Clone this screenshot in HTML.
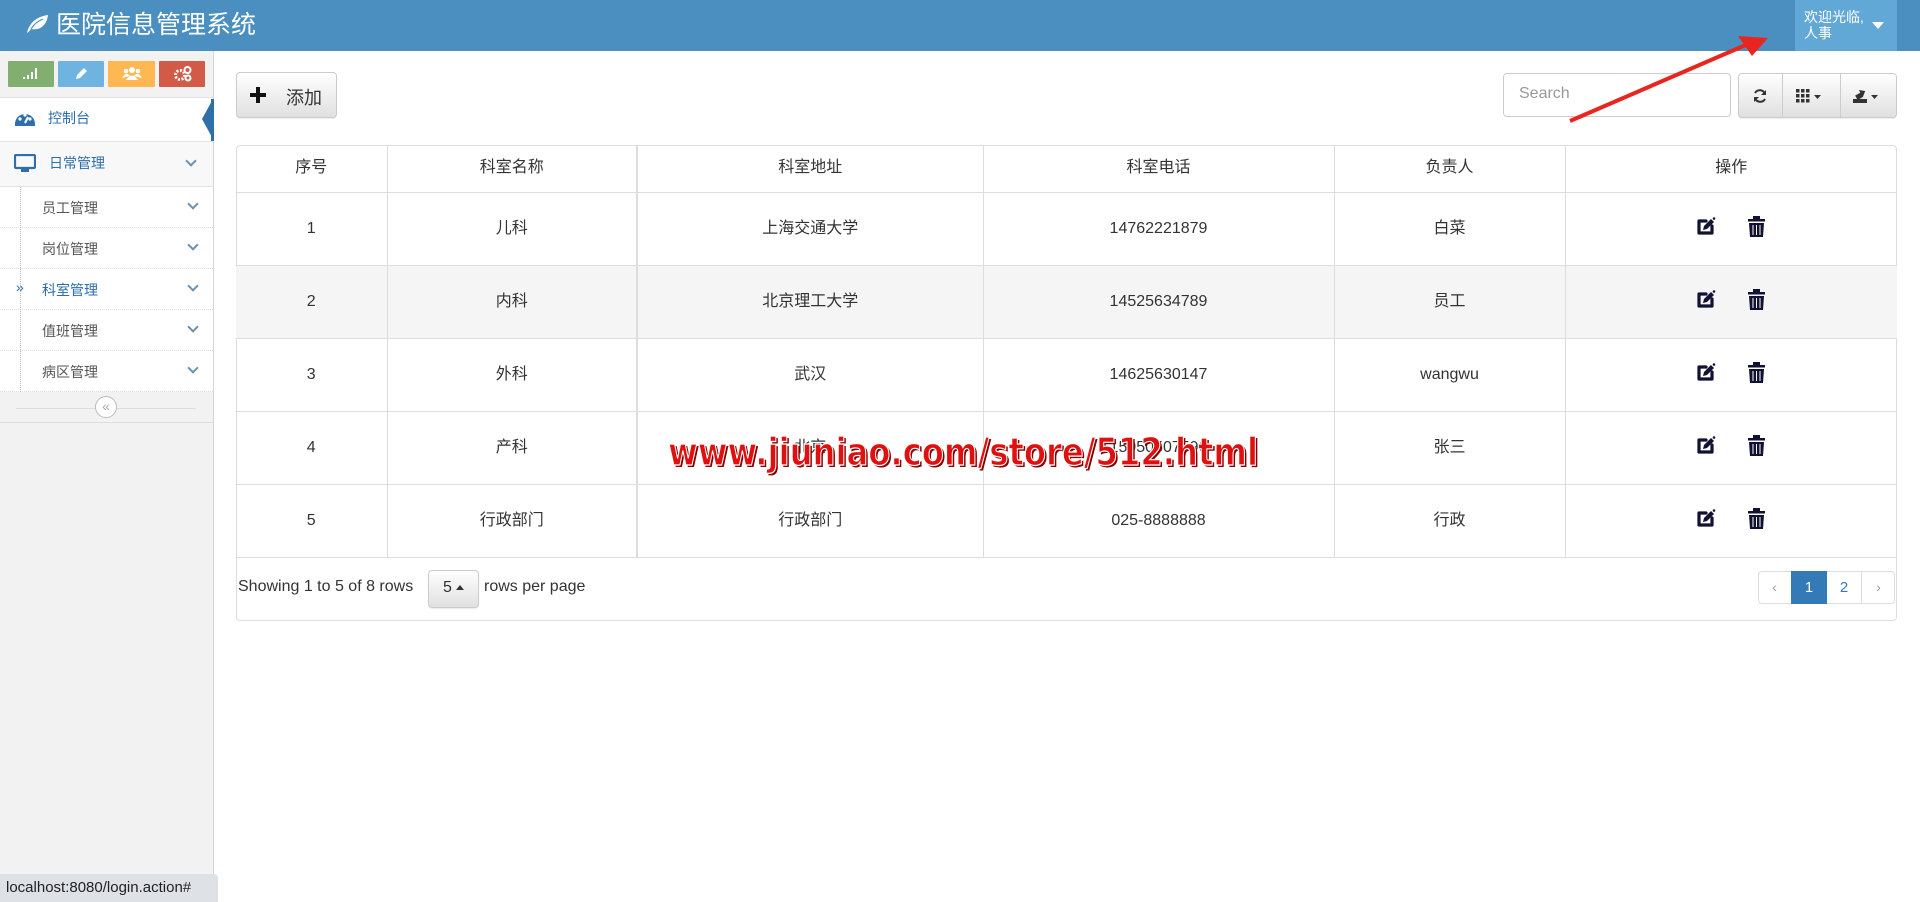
<!DOCTYPE html>
<html><head><meta charset="utf-8">
<style>
*{box-sizing:border-box;margin:0;padding:0}
body{width:1920px;height:902px;overflow:hidden;background:#fff;font-family:"Liberation Sans","Noto Sans CJK SC",sans-serif;color:#333;position:relative}
.abs{position:absolute}
.hdr{left:0;top:0;width:1920px;height:51px;background:#4a8fc0}
.title{left:56px;top:9px;color:#fff;font-size:25px;line-height:32px}
.welcome{left:1795px;top:0;width:102px;height:51px;background:#62a8d6;color:#fff;font-size:14px;line-height:16px;padding:9px 0 0 9px}
.side{left:0;top:51px;width:214px;height:851px;background:#f2f2f2;border-right:1px solid #d5d5d5}
.sb{top:61px;height:26px;border-radius:1px}
.row{left:0;width:213px;border-bottom:1px solid #e3e3e3;font-size:14px}
.sub{left:0;width:213px;height:41px;border-bottom:1px dotted #ddd;background:#fff;font-size:14px;color:#555}
.sub span{position:absolute;left:42px;top:11px}
.chev{position:absolute;right:16px;width:8px;height:8px;border-right:2px solid #6b90b0;border-bottom:2px solid #6b90b0;transform:rotate(45deg)}
.btn{border:1px solid #ccc;border-radius:4px;background:linear-gradient(#fff,#e0e0e0);box-shadow:0 1px 1px rgba(0,0,0,.08)}
table{border-collapse:collapse;position:absolute;left:236px;top:145px;width:1661px;font-size:16px}
td,th{border-right:1px solid #ddd;border-bottom:1px solid #ddd;text-align:center;font-weight:normal;line-height:20px;vertical-align:middle;padding:0}
th{height:47px}
td{height:73px}
tr td:last-child,tr th:last-child{border-right:none}
</style></head><body>
<div class="abs hdr"></div>
<svg class="abs" style="left:25px;top:14px" width="24" height="20" viewBox="0 0 24 20"><path d="M2 19 C4 10 10 3 23 1 C22 10 16 17 6 15 C5 16 4 18 2 19Z" fill="#fff"/><path d="M6 15 C9 10 13 7 18 5" fill="none" stroke="#4a8fc0" stroke-width="1.2"/></svg>
<div class="abs title">医院信息管理系统</div>
<div class="abs welcome">欢迎光临,<br>人事</div>
<div class="abs" style="left:1872px;top:22px;border:6px solid transparent;border-top:7px solid #fff;border-bottom:0;width:0"></div>

<div class="abs side"></div>
<div class="abs sb" style="left:8px;width:46px;background:#82af6f"></div>
<div class="abs sb" style="left:58px;width:46px;background:#6fb3e0"></div>
<div class="abs sb" style="left:108px;width:47px;background:#ffb752"></div>
<div class="abs sb" style="left:159px;width:46px;background:#d15b47"></div>
<svg class="abs" style="left:22px;top:66px" width="16" height="14"><rect x="1" y="11" width="2" height="2" fill="#fff"/><rect x="5" y="9" width="2" height="4" fill="#fff"/><rect x="9" y="6" width="2" height="7" fill="#fff"/><rect x="13" y="2" width="2" height="11" fill="#fff"/></svg>
<svg class="abs" style="left:73px;top:66px" width="16" height="16"><path d="M3 13 L4 9 L11 2 L14 5 L7 12Z" fill="#fff"/></svg>
<svg class="abs" style="left:122px;top:65px" width="20" height="17"><circle cx="10" cy="5" r="3" fill="#fff"/><circle cx="4" cy="6" r="2.3" fill="#fff"/><circle cx="16" cy="6" r="2.3" fill="#fff"/><path d="M4 15 Q10 6 16 15Z M0 13 Q4 6 8 11Z M12 11 Q16 6 20 13Z" fill="#fff"/></svg>
<svg class="abs" style="left:173px;top:65px" width="20" height="17"><circle cx="7" cy="10" r="4.5" fill="none" stroke="#fff" stroke-width="3" stroke-dasharray="2 1.5"/><circle cx="14.5" cy="5" r="3" fill="none" stroke="#fff" stroke-width="2"/><circle cx="15" cy="13" r="2.5" fill="none" stroke="#fff" stroke-width="2"/></svg>

<div class="abs row" style="top:97px;height:45px;background:#fff;border-top:1px solid #e3e3e3"></div>
<svg class="abs" style="left:14px;top:109px" width="22" height="18"><path d="M1 15 A10 10 0 0 1 21 15 L21 17 L1 17Z" fill="#2f6fa8"/><circle cx="6" cy="10" r="1.6" fill="#fff"/><circle cx="11" cy="6" r="1.6" fill="#fff"/><circle cx="16" cy="10" r="1.6" fill="#fff"/><path d="M11 14 L14 8" stroke="#fff" stroke-width="2"/></svg>
<div class="abs" style="left:48px;top:108px;font-size:14px;color:#2b6ea8">控制台</div>
<div class="abs" style="left:202px;top:99px;width:0;height:0;border-top:20px solid transparent;border-bottom:20px solid transparent;border-right:11px solid #2f6fa8"></div>
<div class="abs" style="left:211px;top:99px;width:3px;height:42px;background:#2f6fa8"></div>

<div class="abs row" style="top:142px;height:45px;background:#f8f8f8"></div>
<svg class="abs" style="left:14px;top:154px" width="22" height="20"><rect x="1" y="1" width="20" height="13" rx="1" fill="none" stroke="#2f6fa8" stroke-width="2.2"/><rect x="7" y="15" width="8" height="3" fill="#2f6fa8"/></svg>
<div class="abs" style="left:49px;top:153px;font-size:14px;color:#2b6ea8">日常管理</div>
<div class="chev" style="position:absolute;left:187px;top:157px"></div>

<div class="abs sub" style="top:187px"><span>员工管理</span><div class="chev" style="top:13px"></div></div>
<div class="abs sub" style="top:228px"><span>岗位管理</span><div class="chev" style="top:13px"></div></div>
<div class="abs sub" style="top:269px"><span style="color:#2b6ea8">科室管理</span><div class="chev" style="top:13px"></div><div style="position:absolute;left:16px;top:10px;color:#2b6ea8;font-size:14px">»</div></div>
<div class="abs sub" style="top:310px"><span>值班管理</span><div class="chev" style="top:13px"></div></div>
<div class="abs sub" style="top:351px"><span>病区管理</span><div class="chev" style="top:13px"></div></div>
<div class="abs" style="left:20px;top:187px;height:205px;border-left:1px dotted #bbb"></div>
<div class="abs" style="left:0;top:392px;width:213px;height:31px;background:#f2f2f2;border-bottom:1px solid #ddd"></div>
<div class="abs" style="left:16px;top:408px;width:180px;border-top:1px solid #ddd"></div>
<div class="abs" style="left:95px;top:396px;width:22px;height:22px;border-radius:50%;border:1px solid #bbb;background:#fff;color:#aaa;font-size:14px;line-height:19px;text-align:center">«</div>

<div class="abs btn" style="left:236px;top:72px;width:101px;height:46px"></div>
<svg class="abs" style="left:250px;top:87px" width="16" height="16"><path d="M6 0h4v6h6v4h-6v6h-4v-6h-6v-4h6z" fill="#111"/></svg>
<div class="abs" style="left:286px;top:84px;font-size:18px;color:#333">添加</div>

<div class="abs" style="left:1503px;top:73px;width:228px;height:44px;border:1px solid #ccc;border-radius:4px;font-size:16px;color:#999;padding:11px 0 0 15px">Search</div>
<div class="abs btn" style="left:1738px;top:73px;width:159px;height:45px"></div>
<div class="abs" style="left:1782px;top:74px;height:43px;border-left:1px solid #ccc"></div>
<div class="abs" style="left:1840px;top:74px;height:43px;border-left:1px solid #ccc"></div>
<svg class="abs" style="left:1752px;top:88px" width="16" height="16"><path d="M13 6 A5.5 5.5 0 0 0 3 5" fill="none" stroke="#333" stroke-width="2"/><path d="M3 10 A5.5 5.5 0 0 0 13 11" fill="none" stroke="#333" stroke-width="2"/><path d="M14 2v5h-5z M2 14v-5h5z" fill="#333"/></svg>
<svg class="abs" style="left:1796px;top:89px" width="30" height="14"><g fill="#333"><rect x="0" y="0" width="3.5" height="3.5"/><rect x="5" y="0" width="3.5" height="3.5"/><rect x="10" y="0" width="3.5" height="3.5"/><rect x="0" y="5" width="3.5" height="3.5"/><rect x="5" y="5" width="3.5" height="3.5"/><rect x="10" y="5" width="3.5" height="3.5"/><rect x="0" y="10" width="3.5" height="3.5"/><rect x="5" y="10" width="3.5" height="3.5"/><rect x="10" y="10" width="3.5" height="3.5"/><path d="M18 6h7l-3.5 4z"/></g></svg>
<svg class="abs" style="left:1853px;top:86px" width="32" height="18"><g fill="#333"><rect x="0" y="13" width="14" height="4"/><path d="M2 12 L2 7 L8 7 L8 4 L13 8 L8 12 Z" transform="rotate(-30 7 8)"/><path d="M18 9h7l-3.5 4z"/></g></svg>

<div class="abs" style="left:236px;top:145px;width:1661px;height:476px;border:1px solid #ddd;border-radius:4px"></div>
<table>
<tr><th style="width:151px">序号</th><th style="width:250px;border-right:2px solid #ddd">科室名称</th><th style="width:346px">科室地址</th><th style="width:351px">科室电话</th><th style="width:231px">负责人</th><th>操作</th></tr>
<tr><td>1</td><td style="border-right:2px solid #ddd">儿科</td><td>上海交通大学</td><td>14762221879</td><td>白菜</td><td></td></tr>
<tr style="background:#f5f5f5"><td>2</td><td style="border-right:2px solid #ddd">内科</td><td>北京理工大学</td><td>14525634789</td><td>员工</td><td></td></tr>
<tr><td>3</td><td style="border-right:2px solid #ddd">外科</td><td>武汉</td><td>14625630147</td><td>wangwu</td><td></td></tr>
<tr><td>4</td><td style="border-right:2px solid #ddd">产科</td><td>北京</td><td>15950507596</td><td>张三</td><td></td></tr>
<tr><td>5</td><td style="border-right:2px solid #ddd">行政部门</td><td>行政部门</td><td>025-8888888</td><td>行政</td><td></td></tr>
</table>
<svg class="abs" style="left:1696px;top:212px" width="80" height="320">
<defs><g id="ic"><path d="M3 5 h7 M3 5 v12 h13 v-7" fill="none" stroke="#111133" stroke-width="3.2" stroke-linejoin="round" stroke-linecap="round"/><path d="M7 14 L8 10 L15 3 L18 6 L11 13 Z" fill="#111133"/><circle cx="18" cy="2.5" r="1.3" fill="#111133"/><g fill="#111133"><rect x="52" y="3" width="17" height="2.5"/><rect x="57" y="0" width="7" height="3"/><path d="M53 7h15l-1 14h-13z"/></g><g stroke="#fff" stroke-width="1"><path d="M57 9v10 M60.5 9v10 M64 9v10"/></g></g></defs>
<use href="#ic" y="4"/><use href="#ic" y="77"/><use href="#ic" y="150"/><use href="#ic" y="223"/><use href="#ic" y="296"/>
</svg>

<div class="abs" style="left:238px;top:578px;font-size:16px;color:#333">Showing 1 to 5 of 8 rows</div>
<div class="abs btn" style="left:428px;top:570px;width:51px;height:38px;font-size:16px;padding:8px 0 0 14px">5<span style="display:inline-block;margin-left:4px;vertical-align:middle;border:4px solid transparent;border-bottom:5px solid #333;border-top:0"></span></div>
<div class="abs" style="left:484px;top:578px;font-size:16px;color:#333">rows per page</div>

<div class="abs" style="left:1758px;top:571px;width:137px;height:33px;border:1px solid #ddd;border-radius:4px"></div>
<div class="abs" style="left:1791px;top:571px;width:36px;height:33px;background:#337ab7;color:#fff;font-size:15px;text-align:center;line-height:33px">1</div>
<div class="abs" style="left:1758px;top:571px;width:33px;height:33px;color:#999;font-size:14px;text-align:center;line-height:33px">‹</div>
<div class="abs" style="left:1827px;top:571px;width:35px;height:33px;color:#337ab7;font-size:15px;text-align:center;line-height:33px;border-right:1px solid #ddd">2</div>
<div class="abs" style="left:1862px;top:571px;width:33px;height:33px;color:#999;font-size:14px;text-align:center;line-height:33px">›</div>

<svg class="abs" style="left:0;top:0" width="1920" height="902">
<path d="M1570 121 L1748 44" stroke="#e8261f" stroke-width="4"/>
<path d="M1768 38 L1738 36 L1752 56 Z" fill="#e8261f"/>
<text x="670" y="467" font-family="DejaVu Sans" font-weight="bold" font-size="38" fill="#8a0000" textLength="590" lengthAdjust="spacingAndGlyphs">www.jiuniao.com/store/512.html</text>
<text x="668" y="465" font-family="DejaVu Sans" font-weight="bold" font-size="38" fill="#e01010" stroke="#fff" stroke-width="1.2" textLength="590" lengthAdjust="spacingAndGlyphs">www.jiuniao.com/store/512.html</text>
</svg>

<div class="abs" style="left:0;top:874px;width:218px;height:28px;background:#dee1e6;border-top-right-radius:4px;font-size:15px;color:#222;padding:5px 0 0 6px">localhost:8080/login.action#</div>
</body></html>
